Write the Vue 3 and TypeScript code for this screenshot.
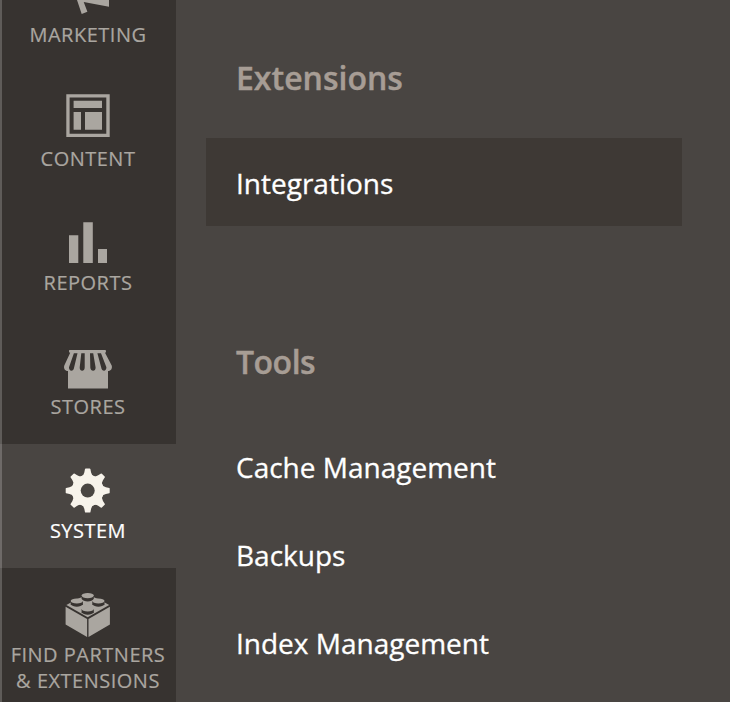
<script setup lang="ts">
interface MenuItem {
  id: string
  lines: string[]
  active?: boolean
}

interface MenuGroup {
  title: string
  links: { label: string; active?: boolean }[]
}

const items: MenuItem[] = [
  { id: 'marketing', lines: ['Marketing'] },
  { id: 'content', lines: ['Content'] },
  { id: 'reports', lines: ['Reports'] },
  { id: 'stores', lines: ['Stores'] },
  { id: 'system', lines: ['System'], active: true },
  { id: 'extensions', lines: ['Find Partners', '& Extensions'] },
]

const groups: MenuGroup[] = [
  { title: 'Extensions', links: [{ label: 'Integrations', active: true }] },
  {
    title: 'Tools',
    links: [{ label: 'Cache Management' }, { label: 'Backups' }, { label: 'Index Management' }],
  },
]

const teeth = [0, 45, 90, 135, 180, 225, 270, 315]
const studs = [
  { x: 37.7, y: 11.6 },
  { x: 26.8, y: 17 },
  { x: 48.4, y: 17 },
  { x: 37.7, y: 25 },
]
</script>

<template>
  <div class="admin">
    <nav class="sidebar">
      <a v-for="item in items" :key="item.id" class="item" :class="[item.id, { active: item.active }]">
        <svg class="icon" width="76" height="56" viewBox="0 0 76 56" fill="currentColor">
          <path v-if="item.id === 'marketing'" d="M20 20 L59 4 V42.8 L33.7 38 L37.4 47.8 L31.7 50 L27 36 L20 34Z" />
          <template v-else-if="item.id === 'content'">
            <path fill-rule="evenodd" d="M16.3 6.2H59.7V49H16.3ZM19.6 9.6V45.8H56.3V9.6Z" />
            <path d="M23.6 12.8H52V20H23.6ZM23.6 24H31V41.8H23.6ZM35 24H52V41.8H35Z" />
          </template>
          <path v-else-if="item.id === 'reports'" d="M19 23.2H28.3V51H19ZM33.3 10.2H42.8V51H33.3ZM48 37H57V51H48Z" />
          <template v-else-if="item.id === 'stores'">
            <path d="M19.5 14H55.2Q56 14 56 15.4Q56 16.7 55 16.7L61.7 29.5C62.5 32.5 61 35 58 35V52.6H18V35C15 35 13.4 32.5 14.3 29.5L20.2 16.7Q19 16.7 19 15.4Q19 14 19.5 14Z" />
            <path class="cut" d="M23.9 17.2H27.5L24.1 31.5C23.6 35.8 18.8 35.8 19 31.2ZM31.3 17.2H34.7V31.5C34.7 35.8 29.6 35.8 29.7 31.5ZM40 17.2H43.2L45.6 31.5C45.7 35.8 40.6 35.8 40.3 31.5ZM47.4 17.2H51L56.4 31.2C56.5 35.8 51.9 35.8 51.2 31.5Z" />
          </template>
          <template v-else-if="item.id === 'system'">
            <circle cx="37.7" cy="30.6" r="15.9" />
            <path
              v-for="angle in teeth"
              :key="angle"
              :transform="`rotate(${angle} 37.7 30.6)`"
              d="M31 16.6Q33.8 15.4 34.3 12.4L35 9Q35.2 8.6 35.7 8.6H39.7Q40.2 8.6 40.4 9L41.1 12.4Q41.6 15.4 44.4 16.6L37.7 22Z"
            />
            <circle class="cut" cx="37.7" cy="30.6" r="7" />
          </template>
          <template v-else>
            <path d="M16.4 21L27 15L37.7 11L48.4 15L59.2 21L37.7 33.2Z" />
            <path d="M15.6 22.7L37.1 34.9V52.9L15.6 40.5ZM59.9 22.7L38.5 34.9V52.9L59.9 40.5Z" />
            <template v-for="stud in studs" :key="`${stud.x}-${stud.y}`">
              <path
                class="cut"
                :d="`M${stud.x - 6.1} ${stud.y}V${stud.y + 3.3}C${stud.x - 4.4} ${stud.y + 6.6} ${stud.x + 4.4} ${stud.y + 6.6} ${stud.x + 6.1} ${stud.y + 3.3}V${stud.y}Z`"
              />
              <ellipse :cx="stud.x" :cy="stud.y" rx="6.1" ry="2.6" />
            </template>
          </template>
        </svg>
        <span v-for="line in item.lines" :key="line" class="label">{{ line }}</span>
      </a>
    </nav>
    <main class="submenu">
      <section v-for="group in groups" :key="group.title" class="group">
        <h2 class="title">{{ group.title }}</h2>
        <a v-for="link in group.links" :key="link.label" class="link" :class="{ current: link.active }">
          {{ link.label }}
        </a>
      </section>
    </main>
  </div>
</template>

<style>
body {
  margin: 0;
  background: #494542;
}
</style>

<style scoped>
.admin {
  display: flex;
  width: 730px;
  height: 702px;
  overflow: hidden;
  background: #494542;
  font-family: 'Open Sans', sans-serif;
}

.sidebar {
  flex: none;
  width: 176px;
  background: #373330;
}

.item {
  --surface: #373330;
  box-sizing: border-box;
  display: flex;
  flex-direction: column;
  align-items: center;
  height: 124px;
  padding: 16px 0 0;
  background: var(--surface);
  box-shadow: inset 2px 0 #5f5c59;
  color: #aaa6a0;
}

.item.marketing {
  margin-top: -52px;
}

.item.extensions {
  height: 134px;
}

.item.active {
  --surface: #494542;
  box-shadow: inset 2px 0 #6e6a68;
  color: #f7f3eb;
}

.icon {
  flex: none;
  display: block;
  margin-bottom: 2px;
}

.cut {
  fill: var(--surface);
}

.label {
  font-size: 20px;
  line-height: 26px;
  letter-spacing: 0.5px;
  text-transform: uppercase;
  white-space: nowrap;
  -webkit-text-stroke: 0.2px currentColor;
}

.active .label {
  color: #fff;
}

.submenu {
  flex: 1;
  padding: 56px 48px 0 30px;
}

.group + .group {
  margin-top: 114px;
}

.title {
  margin: 0 0 38px 30px;
  font-size: 32px;
  line-height: 44px;
  font-weight: 600;
  color: #a79d95;
  -webkit-text-stroke: 0.4px currentColor;
}

.group + .group .title {
  letter-spacing: -0.5px;
}

.link {
  display: block;
  padding: 27px 30px 25px;
  font-size: 28px;
  line-height: 36px;
  color: #fff;
  -webkit-text-stroke: 0.3px currentColor;
}

.link.current {
  background: #3e3935;
}
</style>
